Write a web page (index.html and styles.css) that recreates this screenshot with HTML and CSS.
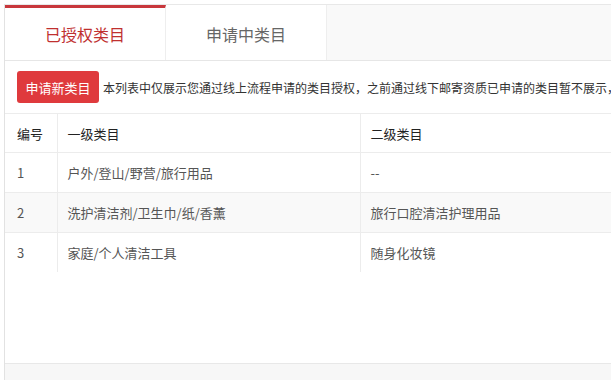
FILE: index.html
```html
<!DOCTYPE html>
<html lang="zh-CN">
<head>
<meta charset="utf-8">
<title>类目管理</title>
<link rel="stylesheet" href="styles.css">
</head>
<body>
<div class="panel">
  <div class="tabs">
    <div class="tab tab-active">已授权类目</div>
    <div class="tab">申请中类目</div>
    <div class="tab-fill"></div>
  </div>
  <div class="toolbar">
    <button class="btn-primary">申请新类目</button>
    <span class="note">本列表中仅展示您通过线上流程申请的类目授权，之前通过线下邮寄资质已申请的类目暂不展示，</span>
  </div>
  <table class="grid">
    <thead>
      <tr>
        <th class="c1">编号</th>
        <th class="c2">一级类目</th>
        <th class="c3">二级类目</th>
      </tr>
    </thead>
    <tbody>
      <tr>
        <td class="c1">1</td>
        <td class="c2">户外/登山/野营/旅行用品</td>
        <td class="c3">--</td>
      </tr>
      <tr class="alt">
        <td class="c1">2</td>
        <td class="c2">洗护清洁剂/卫生巾/纸/香薰</td>
        <td class="c3">旅行口腔清洁护理用品</td>
      </tr>
      <tr class="last">
        <td class="c1">3</td>
        <td class="c2">家庭/个人清洁工具</td>
        <td class="c3">随身化妆镜</td>
      </tr>
    </tbody>
  </table>
  <div class="spacer"></div>
  <div class="footer"></div>
</div>
</body>
</html>
```
FILE: styles.css
```css
* { box-sizing: border-box; }
html, body { margin: 0; padding: 0; height: 100%; background: #fff; overflow: hidden; }
body {
  font-family: "Noto Sans CJK SC", "Liberation Sans", sans-serif;
  color: #333;
  padding: 4px 0 0 4px;
}
.panel {
  height: 376px;
  width: 700px;
  border-top: 1px solid #e8e8e8;
  border-left: 1px solid #e2e2e2;
  display: flex;
  flex-direction: column;
}
.tabs {
  display: flex;
  height: 56px;
  border-bottom: 1px solid #e6e6e6;
  flex-shrink: 0;
}
.tab {
  width: 161px;
  display: flex;
  align-items: center;
  justify-content: center;
  font-size: 16px;
  color: #666;
  background: #fff;
  border-right: 1px solid #eee;
  padding-top: 2px;
}
.tab-active {
  color: #c0302f;
  border-top: 3px solid #c8373c;
  border-right: 1px solid #eee;
  padding-top: 0;
}
.tab-fill {
  flex: 1;
  background: #f9f9f9;
}
.toolbar {
  display: flex;
  align-items: center;
  gap: 4px;
  padding: 10px 0 10px 12px;
  white-space: nowrap;
  overflow: hidden;
  flex-shrink: 0;
}
.btn-primary {
  height: 32px;
  width: 82px;
  padding: 0;
  border: none;
  border-radius: 3px;
  background: #df3a3d;
  color: #fff;
  font-family: inherit;
  font-size: 13px;
  flex-shrink: 0;
}
.note {
  font-size: 12px;
  color: #333;
}
.grid {
  border-collapse: collapse;
  table-layout: fixed;
  width: 700px;
  font-size: 13px;
  flex-shrink: 0;
}
.grid th, .grid td {
  text-align: left;
  font-weight: normal;
  padding: 0 10px;
  border-bottom: 1px solid #ececec;
  white-space: nowrap;
}
.grid th {
  height: 39px;
  color: #222;
  border-top: 1px solid #ececec;
}
.grid td {
  height: 40px;
  color: #555;
}
.grid .last td { border-bottom: none; height: 39px; }
.grid .alt td { background: #f9f9f9; }
.grid .c1 { width: 52px; padding-left: 12px; border-right: 1px solid #ececec; }
.grid .c2 { width: 303px; border-right: 1px solid #ececec; }
.grid .c3 { width: 345px; }
.spacer { flex: 1; }
.footer {
  height: 17px;
  border-top: 1px solid #e8e8e8;
  background: #f7f7f7;
  flex-shrink: 0;
}
```
